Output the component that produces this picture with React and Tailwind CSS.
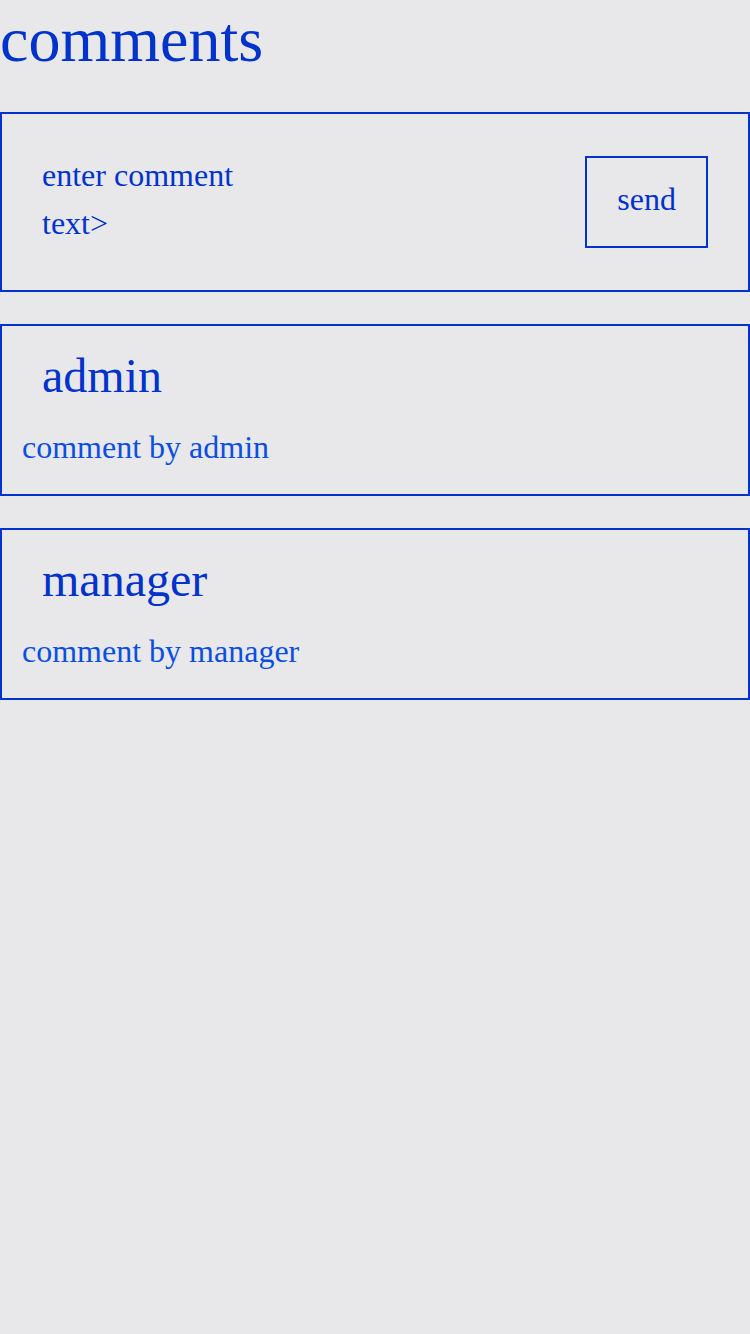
const comments = [
  { id: 1, author: "admin", text: "comment by admin" },
  { id: 2, author: "manager", text: "comment by manager" },
];

export default function App() {
  return (
    <div
      className="min-h-screen w-[750px] bg-[#e8e8ea] text-[#0033cc]"
      style={{ fontFamily: '"Liberation Serif", "Times New Roman", serif' }}
    >
      <h1 className="text-[64px] leading-[80px] mb-8">comments</h1>

      {/* comment input */}
      <div className="border-2 border-[#0033cc] p-10 flex items-center justify-between">
        <div className="w-[240px] -mt-[3px] mb-[3px] text-[32px] leading-[48px]">
          enter comment text&gt;
        </div>
        <button className="border-2 border-[#0033cc] px-[30px] pt-[17px] pb-[23px] text-[32px] leading-[48px]">
          send
        </button>
      </div>

      {/* comment list */}
      <div className="flex flex-col gap-8 mt-8">
        {comments.map((c) => (
          <div
            key={c.id}
            className="border-2 border-[#0033cc] px-5 pt-[22px] pb-[23px]"
          >
            <h2 className="ml-5 text-[48px] leading-[56px]">{c.author}</h2>
            <p className="mt-[19px] text-[32px] leading-[48px] text-[#0a4fe0]">
              {c.text}
            </p>
          </div>
        ))}
      </div>
    </div>
  );
}
